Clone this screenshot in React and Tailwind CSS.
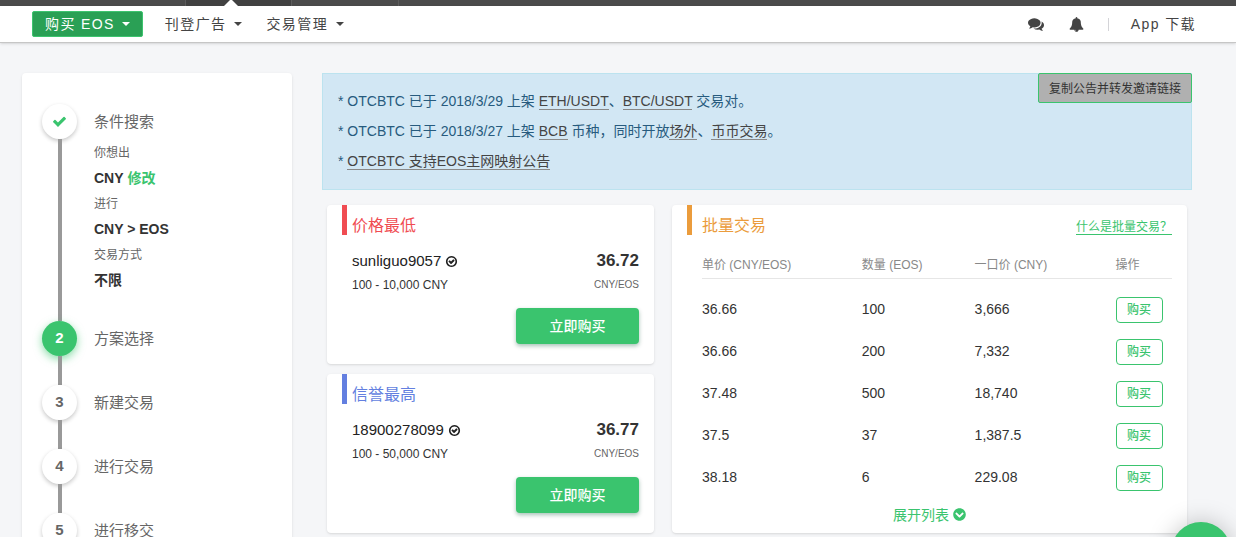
import React, { useState } from "react";
import { FaChevronCircleDown } from "react-icons/fa";

const offers = [
  {
    title: "价格最低",
    bar: "bg-[#f04c52]",
    color: "text-[#f04c52]",
    name: "sunliguo9057",
    limit: "100 - 10,000 CNY",
    price: "36.72",
  },
  {
    title: "信誉最高",
    bar: "bg-[#637fe0]",
    color: "text-[#637fe0]",
    name: "18900278099",
    limit: "100 - 50,000 CNY",
    price: "36.77",
  },
];

const bulkRows = [
  { price: "36.66", amount: "100", total: "3,666" },
  { price: "36.66", amount: "200", total: "7,332" },
  { price: "37.48", amount: "500", total: "18,740" },
  { price: "37.5", amount: "37", total: "1,387.5" },
  { price: "38.18", amount: "6", total: "229.08" },
];

const conditions = [
  { label: "你想出", value: "CNY", editable: true },
  { label: "进行", value: "CNY > EOS" },
  { label: "交易方式", value: "不限" },
];

const steps = ["条件搜索", "方案选择", "新建交易", "进行交易", "进行移交"];

const Caret = () => (
  <svg viewBox="0 0 8 4" className="w-2 h-1" fill="currentColor" aria-hidden="true">
    <path d="M0 0h8L4 4z" />
  </svg>
);

const CommentsIcon = () => (
  <svg viewBox="0 0 1792 1792" className="w-4 h-4" fill="currentColor" aria-hidden="true">
    <path d="M1408 768q0 139-94 257t-256.5 186.5-353.5 68.5q-86 0-176-16-124 88-278 128-36 9-86 16h-3q-11 0-20.5-8t-11.5-21q-1-3-1-6.5t.5-6.5 2-6l2.5-5 3.5-5.5 4-5 4.5-5 4-4.5q5-6 23-25t26-29.5 22.5-29 25-38.5 20.5-44q-124-72-195-177t-71-224q0-139 94-257t256.5-186.5 353.5-68.5 353.5 68.5 256.5 186.5 94 257zm384 256q0 120-71 224.5t-195 176.5q10 24 20.5 44t25 38.5 22.5 29 26 29.5 23 25q1 1 4 4.5t4.5 5 4 5 3.5 5.5l2.5 5 2 6 .5 6.5-1 6.5q-3 14-13 22t-22 7q-50-7-86-16-154-40-278-128-90 16-176 16-271 0-472-132 58 4 88 4 161 0 309-45t264-129q125-92 192-212t67-254q0-77-23-152 129 71 204 178t75 230z" />
  </svg>
);

const BellIcon = () => (
  <svg viewBox="0 0 1792 1792" className="w-[15px] h-[15px]" fill="currentColor" aria-hidden="true">
    <path d="M912 1696q0-16-16-16-59 0-101.5-42.5t-42.5-101.5q0-16-16-16t-16 16q0 73 51.5 124.5t124.5 51.5q16 0 16-16zm816-288q0 52-38 90t-90 38h-448q0 106-75 181t-181 75-181-75-75-181h-448q-52 0-90-38t-38-90q50-42 91-88t85-119.5 74.5-158.5 50-206 19.5-260q0-152 117-282.5t307-158.5q-8-19-8-39 0-40 28-68t68-28 68 28 28 68q0 20-8 39 190 28 307 158.5t117 282.5q0 139 19.5 260t50 206 74.5 158.5 85 119.5 91 88z" />
  </svg>
);

const CheckIcon = () => (
  <svg viewBox="0 0 1792 1792" className="w-[15px] h-[15px]" fill="currentColor" aria-hidden="true">
    <path d="M1671 566q0 40-28 68l-724 724-136 136q-28 28-68 28t-68-28l-136-136-362-362q-28-28-28-68t28-68l136-136q28-28 68-28t68 28l294 295 656-657q28-28 68-28t68 28l136 136q28 28 28 68z" />
  </svg>
);

const VerifiedIcon = () => (
  <svg viewBox="0 0 1792 1792" className="w-[13px] h-[13px]" fill="currentColor" aria-hidden="true">
    <path d="M1299 813l-422 422q-19 19-45 19t-45-19l-294-294q-19-19-19-45t19-45l102-102q19-19 45-19t45 19l147 147 275-275q19-19 45-19t45 19l102 102q19 19 19 45t-19 45zm141 83q0-148-73-273t-198-198-273-73-273 73-198 198-73 273 73 273 198 198 273 73 273-73 198-198 73-273zm224 0q0 209-103 385.5t-279.5 279.5-385.5 103-385.5-103-279.5-279.5-103-385.5 103-385.5 279.5-279.5 385.5-103 385.5 103 279.5 279.5 103 385.5z" />
  </svg>
);

const Header = () => (
  <header>
    {/* Site bar with the active section */}
    <div className="flex h-[6px] bg-[#4b4b4b]">
      <div className="w-[186px] border-r border-[#5c5c5c]" />
      <div className="w-[106px] flex justify-center items-end bg-[#414141] border-r border-[#5c5c5c]">
        <svg viewBox="0 0 14 6" className="w-[14px] h-[6px] mr-4" fill="#fff" aria-hidden="true">
          <path d="M0 6L6 0h2l6 6z" />
        </svg>
      </div>
      <div className="w-[107px] border-r border-[#5c5c5c]" />
    </div>

    <nav className="flex items-center h-[37px] pl-8 pr-10 bg-white border-b border-[#c6c6c6] shadow-sm text-[14px] tracking-widest text-[#444]">
      <button className="flex items-center gap-[7px] h-[26px] px-3 rounded-xs border border-[#3dc46f] bg-[#2aa055] text-white tracking-widest">
        购买 EOS <Caret />
      </button>
      <button className="flex items-center gap-2 ml-[22px] tracking-widest">
        刊登广告 <Caret />
      </button>
      <button className="flex items-center gap-2 ml-6 tracking-widest">
        交易管理 <Caret />
      </button>
      <div className="flex items-center ml-auto">
        <button aria-label="消息">
          <CommentsIcon />
        </button>
        <button aria-label="通知" className="ml-[25px]">
          <BellIcon />
        </button>
        <span className="w-px h-[13px] ml-6 mr-[22px] bg-[#d4d4d8]" />
        <a href="#app">App 下载</a>
      </div>
    </nav>
  </header>
);

const Sidebar = () => (
  <aside className="w-[270px] shrink-0 pt-[31px] px-5 bg-white rounded-sm shadow-sm">
    <ol>
      {steps.map((label, i) => (
        <li key={label} className="flex gap-[17px]">
          <div className="flex flex-col items-center w-[35px] shrink-0">
            <span
              className={
                i === 1
                  ? "flex items-center justify-center w-[35px] h-[35px] rounded-full bg-[#3ac46e] text-white text-[15px] font-bold shadow-[0_3px_8px_rgba(58,196,110,0.6)]"
                  : "flex items-center justify-center w-[35px] h-[35px] rounded-full bg-white text-[#666] text-[15px] font-bold shadow-[0_2px_4px_rgba(0,0,0,0.22)]"
              }
            >
              {i === 0 ? (
                <span className="text-[#3ac46e]">
                  <CheckIcon />
                </span>
              ) : (
                i + 1
              )}
            </span>
            <span className="w-1 flex-1 bg-[#999]" />
          </div>
          <div className="pb-[29px]">
            <p className="text-[15px] leading-[35px] text-[#666]">{label}</p>
            {i === 0 && (
              <div className="pt-px -mb-px">
                {conditions.map((c) => (
                  <div key={c.label}>
                    <p className="text-[12px] leading-[26px] text-[#666]">{c.label}</p>
                    <p className="text-[14px] leading-[25px] font-bold text-[#333]">
                      {c.value}
                      {c.editable && (
                        <a href="#edit" className="ml-1 text-[#3ac46e]">
                          修改
                        </a>
                      )}
                    </p>
                  </div>
                ))}
              </div>
            )}
          </div>
        </li>
      ))}
    </ol>
  </aside>
);

const NoticeLink = ({ children }) => (
  <a href="#notice" className="text-[#444] border-b border-[#888]">
    {children}
  </a>
);

const Notice = () => (
  <section className="relative pt-3 pb-[13px] px-[15px] bg-[#d2e7f4] border border-[#bce3ef] text-[14px] leading-[30px] text-[#275b7e]">
    <p>
      * OTCBTC 已于 2018/3/29 上架 <NoticeLink>ETH/USDT</NoticeLink>、<NoticeLink>BTC/USDT</NoticeLink> 交易对。
    </p>
    <p>
      * OTCBTC 已于 2018/3/27 上架 <NoticeLink>BCB</NoticeLink> 币种，同时开放<NoticeLink>场外</NoticeLink>、
      <NoticeLink>币币交易</NoticeLink>。
    </p>
    <p>
      * <NoticeLink>OTCBTC 支持EOS主网映射公告</NoticeLink>
    </p>
    <button className="absolute -top-px -right-px h-[30px] px-[10px] rounded-xs border border-[#3ac46e] bg-[#b0b0b0] text-[12px] text-[#333]">
      复制公告并转发邀请链接
    </button>
  </section>
);

const OfferCard = ({ offer }) => (
  <section className="px-[15px] pb-5 bg-white rounded-sm shadow-sm">
    <div className="flex gap-[5px]">
      <span className={`w-[5px] h-[30px] ${offer.bar}`} />
      <h2 className={`pt-[9px] text-[16px] leading-6 ${offer.color}`}>{offer.title}</h2>
    </div>
    <div className="flex justify-between pl-[10px] pt-[11px]">
      <div>
        <p className="flex items-center gap-1 text-[15px] leading-6 text-[#222]">
          {offer.name} <VerifiedIcon />
        </p>
        <p className="text-[12px] leading-6 text-[#333]">{offer.limit}</p>
      </div>
      <div className="text-right">
        <p className="text-[17px] leading-6 font-bold text-[#333]">{offer.price}</p>
        <p className="text-[10px] leading-6 text-[#666]">CNY/EOS</p>
      </div>
    </div>
    <div className="flex justify-end pt-[11px]">
      <button className="w-[123px] h-9 rounded-sm bg-[#3ac46e] text-white text-[14px] font-medium shadow-[0_2px_4px_rgba(0,80,50,0.35)]">
        立即购买
      </button>
    </div>
  </section>
);

const BulkTable = ({ expanded, onToggle }) => (
  <section className="px-[15px] bg-white rounded-sm shadow-sm">
    <div className="flex gap-[10px]">
      <span className="w-[5px] h-[30px] bg-[#eb9c3c]" />
      <h2 className="pt-[9px] text-[16px] leading-6 text-[#eb9c3c]">批量交易</h2>
      <p className="ml-auto pt-[13px] text-[12px] leading-[18px] text-[#3ac46e]">
        <a href="#bulk" className="border-b border-[#3ac46e]">
          什么是批量交易？
        </a>
      </p>
    </div>
    <div className="pl-[15px] pt-[14px]">
      <table className="w-full table-fixed text-left">
        <thead className="text-[12px] text-[#888] border-b border-[#e6e6e6]">
          <tr className="h-[26px]">
            <th className="w-[34%] font-normal">单价 (CNY/EOS)</th>
            <th className="w-[24%] font-normal">数量 (EOS)</th>
            <th className="w-[30%] font-normal">一口价 (CNY)</th>
            <th className="w-[12%] font-normal">操作</th>
          </tr>
        </thead>
        <tbody className="text-[14px] text-[#333] before:block before:h-[10px] before:content-['']">
          {bulkRows.map((row) => (
            <tr key={row.total} className="h-[42px]">
              <td>{row.price}</td>
              <td>{row.amount}</td>
              <td>{row.total}</td>
              <td>
                <button className="block w-[47px] h-[26px] rounded-sm border border-[#3ac46e] text-[12px] font-medium text-[#3ac46e]">
                  购买
                </button>
              </td>
            </tr>
          ))}
        </tbody>
      </table>
    </div>
    <button
      onClick={onToggle}
      aria-expanded={expanded}
      className="flex items-center gap-1 mx-auto mt-1 text-[14px] leading-6 text-[#3ac46e]"
    >
      展开列表 <FaChevronCircleDown className="w-[13px] h-[13px]" />
    </button>
  </section>
);

const App = () => {
  const [expanded, setExpanded] = useState(false);

  return (
    <div className="h-screen overflow-hidden bg-[#f5f6f8] font-['Liberation_Sans','Noto_Sans_CJK_SC',sans-serif]">
      <Header />
      <main className="flex gap-[30px] pt-[30px] pl-[22px] pr-11">
        <Sidebar />
        <div className="flex-1">
          <Notice />
          <div className="grid grid-cols-[327fr_515fr] gap-[18px] mt-[15px] px-[5px]">
            <div className="flex flex-col gap-[10px]">
              {offers.map((offer) => (
                <OfferCard key={offer.title} offer={offer} />
              ))}
            </div>
            <BulkTable expanded={expanded} onToggle={() => setExpanded(!expanded)} />
          </div>
        </div>
      </main>

      {/* Support chat launcher */}
      <button
        aria-label="客服"
        className="fixed -bottom-[45px] right-[5px] w-[60px] h-[60px] rounded-full bg-[#3ac46e] shadow-[0_1px_24px_rgba(0,0,0,0.25)]"
      />
    </div>
  );
};

export default App;
